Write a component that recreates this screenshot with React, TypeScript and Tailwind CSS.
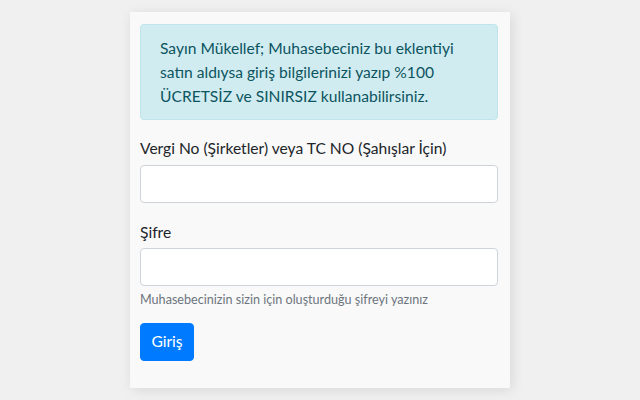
import React from "react";

export default function App() {
  return (
    <div
      className="min-h-[400px] w-[640px] bg-[#f0f0f0] pt-[12px]"
      style={{ fontFamily: '"Lato", "Open Sans", sans-serif' }}
    >
      <div className="mx-auto w-[380px] bg-[#f9f9f9] pl-[10px] pr-[12px] pt-[12px] pb-[27px] shadow-[2px_2px_12px_rgba(0,0,0,0.1)]">
        <div className="rounded-[4px] border border-[#bee5eb] bg-[#d1ecf1] px-[19px] py-[11px] text-[15.6px] leading-[24px] text-[#0c5460]">
          Sayın Mükellef; Muhasebeciniz bu eklentiyi satın aldıysa giriş bilgilerinizi yazıp %100 ÜCRETSİZ ve SINIRSIZ kullanabilirsiniz.
        </div>
        <label className="mt-[16px] mb-[5px] block text-[15.6px] leading-[24px] text-[#212529]">
          Vergi No (Şirketler) veya TC NO (Şahışlar İçin)
        </label>
        <input
          type="text"
          className="block h-[38px] w-full rounded-[4px] border border-[#ced4da] bg-white px-3 outline-none"
        />
        <label className="mt-[17px] mb-[4px] block text-[15.6px] leading-[24px] text-[#212529]">
          Şifre
        </label>
        <input
          type="password"
          className="block h-[38px] w-full rounded-[4px] border border-[#ced4da] bg-white px-3 outline-none"
        />
        <div className="mt-[4px] text-[12.6px] leading-[19px] text-[#6c757d]">
          Muhasebecinizin sizin için oluşturduğu şifreyi yazınız
        </div>
        <button className="mt-[14px] h-[38px] w-[54px] rounded-[4px] border border-[#007bff] bg-[#007bff] text-[15.6px] text-white">
          Giriş
        </button>
      </div>
    </div>
  );
}
